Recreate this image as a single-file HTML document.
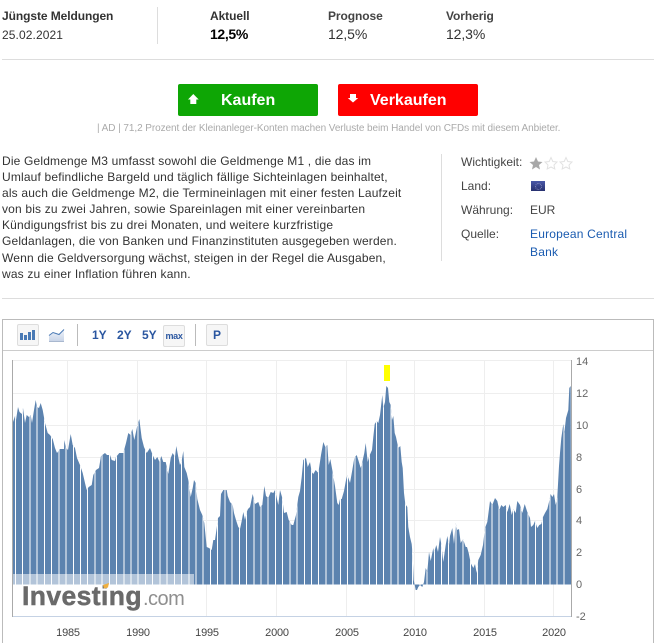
<!DOCTYPE html>
<html lang="de"><head><meta charset="utf-8"><title>Geldmenge M3</title>
<style>
html,body{margin:0;padding:0;background:#fff}
html{width:654px;height:643px;overflow:hidden}
body{width:654px;height:643px;position:relative;overflow:hidden;font-family:"Liberation Sans",Arial,sans-serif;font-size:12px;color:#333}
.a{position:absolute;white-space:nowrap}
.b{font-weight:bold;letter-spacing:-0.08px}
.l{background:#ddd;position:absolute}
.btn{position:absolute;top:84px;width:140px;height:32px;border-radius:2px;color:#fff;font-weight:bold;font-size:16px;line-height:33px}
.tb{position:absolute;box-sizing:border-box;border:1px solid #ddd;border-radius:2px;background:#f6f6f6;height:22px;width:22px;text-align:center}
.r{font-size:12px;line-height:16px;color:#444}
.t{font-weight:bold;font-size:12px;color:#2a56a0}
svg{position:absolute;left:0;top:0}
svg text{font-family:"Liberation Sans",Arial,sans-serif}
</style></head><body>
<div class="a b" style="left:2px;top:9px;line-height:14px">Jüngste Meldungen</div>
<div class="a" style="left:2px;top:28px;line-height:14px;letter-spacing:.1px">25.02.2021</div>
<div class="l" style="left:157px;top:7px;width:1px;height:37px"></div>
<div class="a b" style="left:210px;top:9px;line-height:14px">Aktuell</div>
<div class="a b" style="left:328px;top:9px;line-height:14px;color:#444">Prognose</div>
<div class="a b" style="left:446px;top:9px;line-height:14px;color:#444">Vorherig</div>
<div class="a" style="left:210px;top:26px;font-size:14px;font-weight:bold;letter-spacing:-.35px;line-height:16px;color:#000">12,5%</div>
<div class="a" style="left:328px;top:26px;font-size:14px;letter-spacing:-.1px;line-height:16px">12,5%</div>
<div class="a" style="left:446px;top:26px;font-size:14px;letter-spacing:-.1px;line-height:16px">12,3%</div>
<div class="l" style="left:2px;top:59px;width:652px;height:1px"></div>
<div class="btn" style="left:178px;background:#0ea605"><span class="a" style="left:43px;top:0">Kaufen</span></div>
<div class="btn" style="left:338px;background:#ff0000"><span class="a" style="left:32px;top:0">Verkaufen</span></div>
<div class="a" style="left:97px;top:123px;font-size:10px;letter-spacing:-.07px;line-height:12px;color:#aaa">| AD | 71,2 Prozent der Kleinanleger-Konten machen Verluste beim Handel von CFDs mit diesem Anbieter.</div>
<div class="a" style="left:2px;top:153px;line-height:16.1px;letter-spacing:.17px;color:#333">Die Geldmenge M3 umfasst sowohl die Geldmenge M1 , die das im<br>Umlauf befindliche Bargeld und täglich fällige Sichteinlagen beinhaltet,<br>als auch die Geldmenge M2, die Termineinlagen mit einer festen Laufzeit<br>von bis zu zwei Jahren, sowie Spareinlagen mit einer vereinbarten<br>Kündigungsfrist bis zu drei Monaten, und weitere kurzfristige<br>Geldanlagen, die von Banken und Finanzinstituten ausgegeben werden.<br>Wenn die Geldversorgung wächst, steigen in der Regel die Ausgaben,<br>was zu einer Inflation führen kann.</div>
<div class="l" style="left:441px;top:154px;width:1px;height:107px"></div>
<div class="a r" style="left:461px;top:154px">Wichtigkeit:</div>
<div class="a r" style="left:461px;top:178px">Land:</div>
<div class="a r" style="left:461px;top:202px">Währung:</div>
<div class="a r" style="left:461px;top:226px">Quelle:</div>
<div class="a r" style="left:530px;top:202px">EUR</div>
<div class="a r" style="left:530px;top:225px;color:#1a5bb0;line-height:18px;letter-spacing:.2px">European Central<br>Bank</div>
<div class="a" style="left:531px;top:181px;width:14px;height:10px;background:linear-gradient(#4a58a8,#27306f)"></div>
<div class="a" style="left:535px;top:183px;width:5px;height:5px;border:1px dotted #8a8ec0;border-radius:50%"></div>
<div class="l" style="left:2px;top:298px;width:652px;height:1px"></div>
<div class="a" style="left:2px;top:319px;width:650px;height:323px;border:1px solid #bbb;border-bottom:0"></div>
<div class="a" style="left:3px;top:350px;width:650px;height:1px;background:#ccc"></div>
<div class="tb" style="left:17px;top:324px"></div>
<div class="tb" style="left:163px;top:325px;color:#2a56a0;font-size:9px;font-weight:bold;line-height:20px;letter-spacing:-.3px">max</div>
<div class="tb" style="left:206px;top:324px;color:#2a56a0;font-size:12px;font-weight:bold;line-height:20px">P</div>
<div class="l" style="left:77px;top:324px;width:1px;height:22px;background:#bbb"></div>
<div class="l" style="left:195px;top:324px;width:1px;height:22px;background:#bbb"></div>
<div class="a t" style="left:92px;top:328px;line-height:14px">1Y</div>
<div class="a t" style="left:117px;top:328px;line-height:14px">2Y</div>
<div class="a t" style="left:142px;top:328px;line-height:14px">5Y</div>
<svg width="654" height="643" viewBox="0 0 654 643" xmlns="http://www.w3.org/2000/svg">
<defs>
<clipPath id="p"><polygon points="13,584.5 13,422 15,416 16,420 18,407 19.5,412 20.7,413 22,414 23,408 25,423 26.7,415 29,417 30.7,415 32,423 34,410 35.7,400 37,407 39,408 40.7,403 42.7,410 45,423 47.7,433 50,435 52.7,439 55,448 57,453 60,449 64,449 64.3,440 66,448 68,450 70.7,434 72.7,445 75,448 77,458 80,465 82.7,473 85,483 86.7,490 88.7,487 91.7,485 93.3,475 96,470 99,468 101,456 105,453 107,455 110,455 111.7,460 115,461 116,457 119.3,453 123.3,453 126,443 128.3,433 130.5,435 132.3,429 134.3,440 137,427 139.3,419 141.7,438 144,447 146.7,453 150,448 152.7,455 155,460 157.3,457 159.5,462 161.3,456 163.3,462 165.7,462 168.3,474 170.7,458 172.7,453 175,457 176.3,446 178.3,457 180,465 181.5,462 183.3,451 184.3,467 186.7,473 188.3,480 190.7,497 192.7,488 194,480 195.7,483 197.3,499 200,510 202.3,515 204.3,523 206.7,547 209,548 211.7,550 213.3,540 215,540 216.7,528 218,518 220,516 221,494 223.3,490 226.7,490 227.7,496 230,502 232.7,505 234,513 236,520 238.3,527 240,529 241.7,521 243.3,512 245,520 246.7,512 248,509 250,507 252.7,494 255,504 258.3,502 260,507 262.3,505 264.3,486 266,496 268.3,498 270.7,492 273.3,493 275,490 278.3,505 280,490 282.3,498 284,513 286.7,512 288.7,520 291.7,525 293.3,525 296,515 298.3,497 300,491 301.7,477 303.3,460 306,458 307.7,467 310,462 311.7,472 313.3,474 315.7,470 318.3,473 321,455 323.3,442 325.3,447 327.3,445 328.7,465 330.3,459 332.3,470 335,486 337.3,503 338.7,505 340,499 341.7,499 344,491 346,480 347.3,475 350,483 352.3,470 354.3,458 356.7,455 358.3,460 360.7,468 362.3,462 364.3,453 365.7,443 367.7,462 369.3,456 372,450 373.3,437 374.7,424 376.7,421 378.3,423 380,415 382.3,395 383.3,408 385,402 386.3,386 388,388 389.3,402 390.7,405 392,420 393.3,416 394.7,433 396,437 398.3,448 400.3,446 401.7,462 402.7,468 404,493 405.3,504 407.3,507 408.3,527 410,537 411.7,544 412.7,556 413.7,580 414.7,585 415.7,590 417,590 418.3,587 420,585 422.3,587 424,582 425.7,568 427.3,572 429,552 430.7,561 433.3,548 434,553 436.3,545 438,552 440,537 441.3,544 443.3,562 445.7,545 447.3,536 449,545 450,536 452.3,528 454,544 455.7,523 457.3,530 459,529 460.7,543 463,539 465.7,547 467,547 468.7,553 470.7,563 473.3,568 475,564 476.7,573 478.3,560 480.7,555 483,545 485,528 487.3,522 490,501 492.3,505 495,498 497.3,501 499.3,510 501.3,505 503.3,507 505.7,505 507.3,512 509.7,504 511.7,515 513.3,509 515.7,513 517.3,501 520,505 522.3,513 524.7,504 527.3,512 530,518 531,527 533.3,525 535,521 537.3,528 539.3,525 541.3,524 543,517 545,513 547.3,509 549,502 550.7,494 552.3,497 554,494 555.7,505 557.3,497 559,466 560,453 561.3,438 563.3,424 564.3,433 566,418 568.3,410 569.3,388 570.7,386 571,584.5"/></clipPath>
<linearGradient id="lg" x1="0" y1="0" x2="0" y2="1"><stop offset="0" stop-color="#eef2f9"/><stop offset="1" stop-color="#c9d5e8"/></linearGradient>
</defs>
<!-- toolbar icons -->
<g fill="#4a7ab5">
<rect x="20" y="333" width="3" height="7"/><rect x="24" y="335" width="3" height="5"/><rect x="28" y="332" width="3" height="8"/><rect x="32" y="330" width="3" height="10"/>
</g>
<polygon points="49,336 53,333 56,334 59,335 64,330 64,341 49,341" fill="url(#lg)"/>
<polyline points="49,335.500 53,332.500 56,333.500 59,334.500 64,329.500" fill="none" stroke="#4a7ab5" stroke-width="1"/>
<rect x="49" y="341" width="15" height="1" fill="#a9b8cf"/>
<!-- stars -->
<polygon points="536,157 538,161.500 542.500,162 539,165 540,169.500 536,167 532,169.500 533,165 529.500,162 534,161.500" fill="#a8a8a8"/>
<polygon points="551,157.500 552.800,161.500 557,162 554,165 554.800,169 551,167 547.200,169 548,165 545,162 549.200,161.500" fill="#fff" stroke="#e2e2e2"/>
<polygon points="566,157.500 567.800,161.500 572,162 569,165 569.800,169 566,167 562.200,169 563,165 560,162 564.200,161.500" fill="#fff" stroke="#e2e2e2"/>
<!-- button arrows -->
<polygon points="193.300,94 198.700,99.500 196.300,99.500 196.300,104 190.300,104 190.300,99.500 188,99.500" fill="#fff"/>
<polygon points="350,94 356,94 356,98 358.200,98 353,102.500 347.800,98 350,98" fill="#fff"/>
<!-- grid -->
<g stroke="#eee" stroke-width="1" shape-rendering="crispEdges">
<line x1="13" x2="571" y1="360.500" y2="360.500"/><line x1="13" x2="571" y1="393.500" y2="393.500"/><line x1="13" x2="571" y1="425.500" y2="425.500"/><line x1="13" x2="571" y1="457.500" y2="457.500"/><line x1="13" x2="571" y1="489.500" y2="489.500"/><line x1="13" x2="571" y1="520.500" y2="520.500"/><line x1="13" x2="571" y1="552.500" y2="552.500"/>
<line x1="67.500" x2="67.500" y1="360" y2="616"/><line x1="137.500" x2="137.500" y1="360" y2="616"/><line x1="206.500" x2="206.500" y1="360" y2="616"/><line x1="276.500" x2="276.500" y1="360" y2="616"/><line x1="346.500" x2="346.500" y1="360" y2="616"/><line x1="414.500" x2="414.500" y1="360" y2="616"/><line x1="484.500" x2="484.500" y1="360" y2="616"/><line x1="553.500" x2="553.500" y1="360" y2="616"/>
</g>
<!-- bars -->
<g clip-path="url(#p)">
<rect x="13" y="380" width="558" height="220" fill="#5c83af"/>
<line x1="15" x2="571" y1="490" y2="490" stroke="#fff" stroke-width="220" stroke-dasharray="1 6.22" shape-rendering="crispEdges"/>
</g>
<!-- axes -->
<rect x="13" y="616" width="558" height="1" fill="#c5d2e4"/>
<rect x="12" y="360" width="1" height="257" fill="#aaa"/>
<rect x="571" y="360" width="1" height="257" fill="#aaa"/>
<!-- watermark -->
<rect x="13" y="574" width="181" height="11" fill="#fff" fill-opacity="0.53"/>
<rect x="13" y="585" width="181" height="31" fill="#fff"/>
<text x="22" y="605" font-size="26.500" font-weight="bold" fill="#6a6a6a" stroke="#6a6a6a" stroke-width="0.5" letter-spacing="0.4">Investing</text>
<text x="143" y="605" font-size="20" fill="#8f8f8f" letter-spacing="-0.5">.com</text>
<polygon points="103,585 109,583 108,587.500 104,588.500" fill="#f0b040"/>
<!-- yellow marker -->
<rect x="384" y="365" width="6" height="16" fill="#ffff00"/>
<!-- axis labels -->
<g font-size="11" fill="#444" text-anchor="middle" letter-spacing="-0.2">
<text x="68" y="636">1985</text><text x="138" y="636">1990</text><text x="207" y="636">1995</text><text x="277" y="636">2000</text><text x="347" y="636">2005</text><text x="415" y="636">2010</text><text x="485" y="636">2015</text><text x="554" y="636">2020</text>
</g>
<g font-size="11" fill="#666">
<text x="576" y="365">14</text><text x="576" y="397">12</text><text x="576" y="429">10</text><text x="576" y="461">8</text><text x="576" y="493">6</text><text x="576" y="524">4</text><text x="576" y="556">2</text><text x="576" y="588">0</text><text x="576" y="620">-2</text>
</g>
</svg>
</body></html>
